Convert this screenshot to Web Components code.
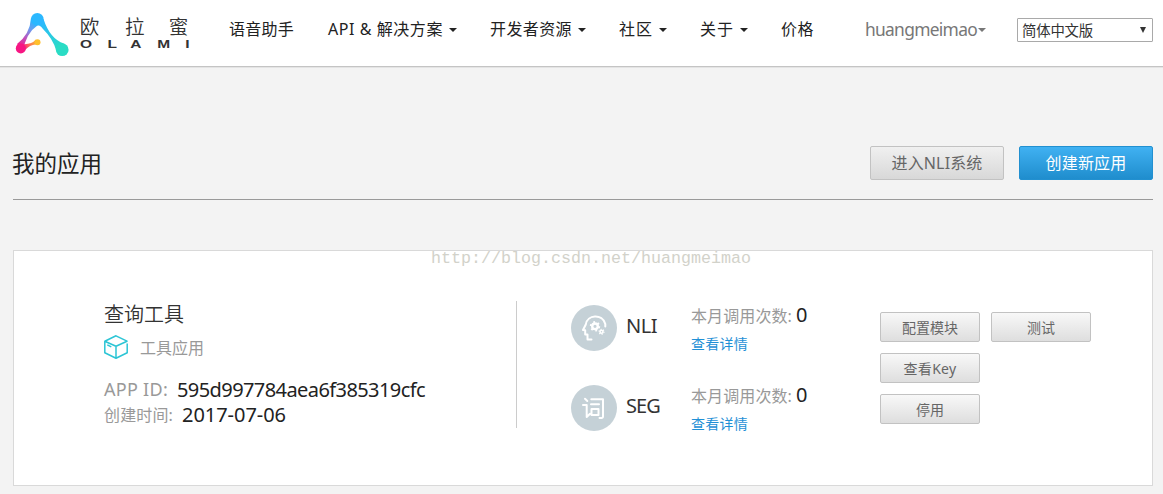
<!DOCTYPE html>
<html lang="zh-CN">
<head>
<meta charset="utf-8">
<title>OLAMI</title>
<style>
body{margin:0;background:#f3f3f3;color:#222;font-family:"Noto Sans","Noto Sans CJK SC",sans-serif;font-size:16px;overflow:hidden}
</style>
</head>
<body>
<olami-page></olami-page>
<script>
const define=(name,html,setup)=>customElements.define(name,class extends HTMLElement{
  connectedCallback(){
    if(this.shadowRoot)return;
    const t=document.createElement('template');
    t.innerHTML=html;
    this.attachShadow({mode:'open'}).append(t.content.cloneNode(true));
    if(setup)setup(this,this.shadowRoot);
  }
});

/* One line of text, tracked so that its advance equals the w attribute. */
define('text-run',`<style>:host{display:block;white-space:pre;flex:none}span{display:inline-block}</style><span><slot></slot></span>`,(el,root)=>{
  const w=+el.getAttribute('w'),span=root.querySelector('span');
  if(!w)return;
  const n=el.textContent.length;
  span.style.letterSpacing=((w-span.getBoundingClientRect().width)/n)+'px';
  el.style.width=w+'px';
});

define('olami-logo',`<style>:host{display:block;flex:none;width:229px;height:66px}svg{display:block}</style>
<svg width="229" height="66" viewBox="0 0 229 66">
<defs>
<linearGradient id="l" gradientUnits="userSpaceOnUse" x1="36" y1="22" x2="21" y2="48"><stop offset="0" stop-color="#2bb8ff"/><stop offset=".3" stop-color="#6b9df0"/><stop offset=".65" stop-color="#c050bb"/><stop offset="1" stop-color="#f71683"/></linearGradient>
<linearGradient id="r" gradientUnits="userSpaceOnUse" x1="40" y1="23" x2="60" y2="48"><stop offset="0" stop-color="#2bb8ff"/><stop offset="1" stop-color="#2adcc5"/></linearGradient>
<linearGradient id="y" gradientUnits="userSpaceOnUse" x1="22" y1="48" x2="38" y2="42"><stop offset="0" stop-color="#f71683"/><stop offset=".5" stop-color="#fb7555"/><stop offset="1" stop-color="#ffc02d"/></linearGradient>
</defs>
<path fill="url(#r)" d="M35 25Q39 24 43 29Q53 39 56 50L64 43.5Q50 39 43.5 19Z"/>
<path fill="url(#l)" d="M31 18Q30 34 17 44L23 51Q26 33 38 25L40 20Z"/>
<path fill="url(#y)" d="M22 44Q31 45 36 39.5L38 45Q32 43 24 51Z"/>
<circle cx="37.3" cy="19.3" r="6.3" fill="#2bb8ff"/>
<circle cx="20.8" cy="48.4" r="5" fill="#f71683"/>
<circle cx="62.2" cy="49.7" r="6.4" fill="#2adcc5"/>
<circle cx="37.5" cy="42.3" r="3" fill="#ffc02d"/>
<text x="79.8 125 168.7" y="33.5" font-family="Noto Sans CJK SC,sans-serif" font-size="19.5" font-weight="350" fill="#333">欧拉蜜</text>
<text transform="translate(80 48) scale(1.36 1)" x="0 20.3 37 56.8 77.4" y="0" font-family="Liberation Sans,sans-serif" font-size="11.4" font-weight="bold" fill="#333">OLAMI</text>
</svg>`);

define('nav-item',`<style>:host{display:flex;align-items:center;flex:none;height:24px;line-height:24px}
svg{display:none;margin-left:var(--gap,6px);margin-top:2px}:host([menu]) svg{display:block}</style>
<slot></slot><svg width="8" height="4"><path fill="currentColor" d="M0 0H8L4 4Z"/></svg>`);

define('language-select',`<style>:host{display:flex;box-sizing:border-box;align-items:center;justify-content:space-between;flex:none;width:136px;height:24px;margin-top:1px;padding:1px 6px 0 4px;border:1px solid #a9a9a9;border-radius:1px;background:#fff;font-size:14.4px;line-height:22px;color:#333}
svg{margin-top:-2px}</style><slot></slot><svg width="6" height="6"><path fill="#333" d="M0 0H6L3 6Z"/></svg>`);

define('site-header',`<style>:host{display:flex;box-sizing:border-box;height:68px;background:#fff;border-bottom:1px solid #e4e4e4;box-shadow:inset 0 -1px #c4c4c4}
nav{display:flex;padding-top:17px}
.user{color:#777;font-size:17.4px;--gap:1px}</style>
<olami-logo></olami-logo>
<nav>
<nav-item style="width:99px"><text-run w="65">语音助手</text-run></nav-item>
<nav-item menu style="width:162px"><text-run w="115">API &amp; 解决方案</text-run></nav-item>
<nav-item menu style="width:129px"><text-run w="82">开发者资源</text-run></nav-item>
<nav-item menu style="width:81px"><text-run w="34">社区</text-run></nav-item>
<nav-item menu style="width:81px"><text-run w="34">关于</text-run></nav-item>
<nav-item style="width:84px"><text-run w="33">价格</text-run></nav-item>
<nav-item menu class="user" style="width:152px"><text-run w="112">huangmeimao</text-run></nav-item>
<language-select><text-run w="71">简体中文版</text-run></language-select>
</nav>`);

define('push-button',`<style>:host{display:flex;box-sizing:border-box;align-items:center;justify-content:center;width:100px;height:30px;border:1px solid #c2c2c2;border-radius:2px;background:linear-gradient(#f8f8f8,#dedede);color:#666;font-size:14px;line-height:20px;padding-top:1px}
:host([large]){width:134px;height:34px;padding-top:0;font-size:16px;background:linear-gradient(#f0f0f0,#d8d8d8)}
:host([primary]){background:linear-gradient(#40b1f2,#1f8dcd);border-color:#2290d0;color:#fff}</style><slot></slot>`);

define('page-title',`<style>:host{display:flex;box-sizing:border-box;height:132px;margin:0 10px 0 13px;padding-top:78px;border-bottom:1px solid #999}
h1{margin:0 0 0 -1px;flex:1;font-size:22.5px;font-weight:400;line-height:35px}div{display:flex;gap:15px}</style>
<h1><text-run w="90"><slot></slot></text-run></h1><div><slot name="actions"></slot></div>`,(el,root)=>{
  const run=root.querySelector('text-run');
  run.style.width='90px';
});

define('app-info',`<style>:host{display:block;box-sizing:border-box;width:413px;height:127px;border-right:1px solid #ccc}
.n{font-size:20px;line-height:28px;color:#333;font-weight:350}
.t{display:flex;align-items:center;gap:12px;height:24px;margin:6px 0 18px;color:#999}.t text-run{margin-top:-1px}
.r{display:flex;align-items:center;height:25px;line-height:25px;color:#999}
.v{font-size:20px;color:#222}svg{display:block}</style>
<text-run class="n" w="80">查询工具</text-run>
<div class="t"><svg width="24" height="24" fill="none" stroke="#2cc5d5" stroke-width="1.5" stroke-linejoin="round"><path d="M12 .8L23 6.2L12 11.3L.8 6.2ZM.8 6.2V17.8L12 23.2L23.2 17.8V8.5M12 11.3V23.2M3.3 9.8L7.3 11.8"/></svg><text-run w="64">工具应用</text-run></div>
<div class="r"><text-run style="font-size:18px;margin-right:9px" w="64">APP ID:</text-run><text-run class="v" w="248">595d997784aea6f385319cfc</text-run></div>
<div class="r"><text-run style="margin:2px 9px 0 0" w="69">创建时间:</text-run><text-run class="v" w="104">2017-07-06</text-run></div>`);

define('usage-row',`<style>:host{display:grid;grid-template-columns:55px 65px 1fr;height:54px}
.i{margin-top:4px;width:46px;height:46px;border-radius:50%;background:#c5d1d7;display:flex}
.k{font-size:20px;line-height:28px;margin-top:11px;color:#333}
.c{display:flex;align-items:center;height:28px;color:#999}.z{font-size:20px;line-height:28px;color:#222;margin-left:4px}
a{display:block;font-size:14px;line-height:20px;margin-top:5px;color:#1f90d6}</style>
<div class="i"><slot name="icon"></slot></div><div class="k"><slot></slot></div>
<div><div class="c"><text-run w="101">本月调用次数:</text-run><text-run class="z" w="11">0</text-run></div><a><text-run w="57">查看详情</text-run></a></div>`);

define('nli-icon',`<style>:host{display:block}</style><svg width="46" height="46" fill="none" stroke="#fff" stroke-width="2" stroke-linecap="round" stroke-linejoin="round"><path d="M20.5 34.5H16.5V29.5H14.2V25.2L12 25L14.8 19.5C16 9.5 31.5 8.3 34.3 19V21.5"/><circle cx="24" cy="21.3" r="2.8" stroke-width="2.4"/><circle cx="24" cy="21.3" r="4.3" stroke-width="1.8" stroke-dasharray="1.8 2.7" stroke-linecap="butt"/><circle cx="30.5" cy="26.8" r="1.5" stroke-width="1.6"/><circle cx="30.5" cy="26.8" r="2.5" stroke-width="1.2" stroke-dasharray="1.1 1.52" stroke-linecap="butt"/></svg>`);
define('seg-icon',`<style>:host{display:block}</style><svg width="46" height="46" fill="none" stroke="#fff" stroke-width="2" stroke-linecap="round" stroke-linejoin="round"><path d="M14 13.8L16.3 16M12 20H15.7V32L19 28.8M20.3 14.3H32V31.5Q32 33.5 28.5 33M20 19.3H28M20.5 24H27.5V30H20.5Z"/></svg>`);

define('app-card',`<style>:host{display:flex;position:relative;box-sizing:border-box;height:236px;margin:50px 10px 0 13px;padding:50px 0 0 90px;border:1px solid #d9d9d9;background:#fff}
.u{display:flex;flex-direction:column;gap:26px;width:309px;margin-left:54px}
.b{display:grid;grid-template-columns:100px 100px;gap:11px;align-content:start;margin-top:11px}
.b push-button:nth-child(3){grid-column:1}.b push-button:nth-child(4){grid-column:1}
.w{position:absolute;left:417px;top:-2px;color:#d2d2ca;font:16.67px/20px "Liberation Mono",monospace}</style>
<app-info></app-info>
<div class="u"><usage-row><nli-icon slot="icon"></nli-icon><text-run w="31">NLI</text-run></usage-row>
<usage-row><seg-icon slot="icon"></seg-icon><text-run w="34">SEG</text-run></usage-row></div>
<div class="b"><push-button><text-run w="56">配置模块</text-run></push-button><push-button><text-run w="28">测试</text-run></push-button><push-button><text-run w="53">查看Key</text-run></push-button><push-button><text-run w="28">停用</text-run></push-button></div>
<text-run class="w" w="320">http://blog.csdn.net/huangmeimao</text-run>`);

define('olami-page',`<style>:host{display:block;height:494px}</style>
<site-header></site-header>
<page-title>我的应用<push-button large slot="actions"><text-run w="91">进入NLI系统</text-run></push-button><push-button large primary slot="actions"><text-run w="81">创建新应用</text-run></push-button></page-title>
<app-card></app-card>`);
</script>
</body>
</html>
